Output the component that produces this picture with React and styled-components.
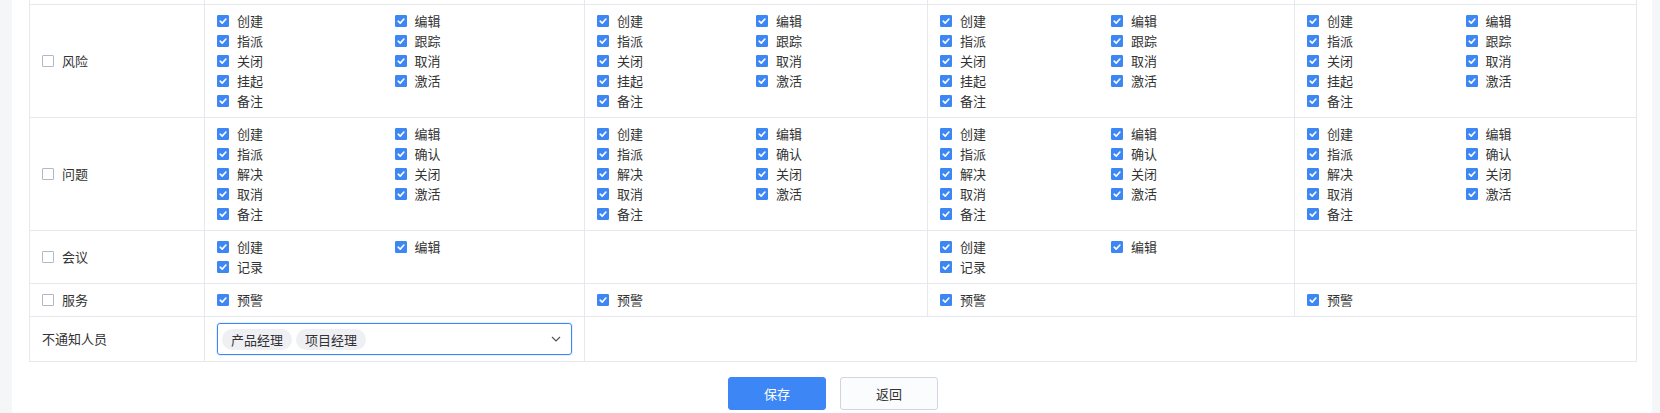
import React from "react";
import styled, { createGlobalStyle } from "styled-components";

const GlobalStyle = createGlobalStyle`
  html, body {
    margin: 0;
    padding: 0;
    background: #f5f6f8;
  }
  body {
    font-family: "Noto Sans CJK SC", "Noto Sans", Roboto, sans-serif;
    font-size: 13px;
    color: #333;
  }
  * { box-sizing: border-box; }
`;

const Page = styled.div`
  padding: 0 8px 0 12px;
  min-height: 100vh;
`;

const Card = styled.div`
  background: #fff;
  min-height: 100vh;
  padding: 0 15px 24px 17px;
`;

const Table = styled.div`
  display: grid;
  grid-template-columns: 175px 380px 343px 367px 342px;
  border-left: 1px solid #e7e8ee;
`;

const Cell = styled.div`
  border-right: 1px solid #e7e8ee;
  border-bottom: 1px solid #e7e8ee;
  padding: 6px 12px;
  grid-column: ${(p) => (p.$span ? `span ${p.$span}` : "auto")};
`;

/* tail of the row scrolled above the view */
const StubCell = styled.div`
  height: 5px;
  border-right: 1px solid #e7e8ee;
  border-bottom: 1px solid #e7e8ee;
`;

const LabelCell = styled(Cell)`
  display: flex;
  align-items: center;
  gap: 8px;
  line-height: 20px;
`;

const ActionGrid = styled.div`
  display: grid;
  grid-template-columns: 1fr 1fr;
`;

const Item = styled.label`
  display: flex;
  align-items: center;
  gap: 8px;
  height: 20px;
  line-height: 20px;
  white-space: nowrap;
`;

const Box = styled.span`
  flex: none;
  width: 12px;
  height: 12px;
  border-radius: 1px;
  display: inline-flex;
  align-items: center;
  justify-content: center;
  background: ${(p) => (p.$checked ? "#3d87f5" : "#fff")};
  border: 1px solid ${(p) => (p.$checked ? "#3d87f5" : "#b3b8c6")};
`;

const Select = styled.div`
  height: 32px;
  border: 1px solid #3d87f5;
  border-radius: 3px;
  box-shadow: 0 0 0 1px rgba(61, 135, 245, 0.12);
  display: flex;
  align-items: center;
  padding: 0 10px 0 4px;
  gap: 4px;
`;

const Tag = styled.span`
  height: 21px;
  line-height: 21px;
  padding: 0 9px;
  border-radius: 11px;
  background: #eff0f3;
  color: #333;
`;

const Chevron = styled.svg`
  margin-left: auto;
  flex: none;
`;

const Footer = styled.div`
  display: flex;
  justify-content: center;
  gap: 14px;
  margin-top: 15px;
`;

const Button = styled.button`
  width: 98px;
  height: 33px;
  border-radius: 3px;
  font-family: inherit;
  font-size: 13px;
  cursor: pointer;
  background: ${(p) => (p.$primary ? "#3c86f6" : "#fbfcfe")};
  color: ${(p) => (p.$primary ? "#fff" : "#333")};
  border: 1px solid ${(p) => (p.$primary ? "#3c86f6" : "#d1d5e0")};
`;

function CheckBox({ checked }) {
  return (
    <Box $checked={checked}>
      {checked && (
        <svg width="10" height="10" viewBox="0 0 10 10">
          <polyline
            points="2.2,5.2 4.2,7.1 7.9,3"
            fill="none"
            stroke="#fff"
            strokeWidth="1.6"
            strokeLinecap="round"
            strokeLinejoin="round"
          />
        </svg>
      )}
    </Box>
  );
}

const riskActions = ["创建", "编辑", "指派", "跟踪", "关闭", "取消", "挂起", "激活", "备注"];
const issueActions = ["创建", "编辑", "指派", "确认", "解决", "关闭", "取消", "激活", "备注"];
const meetingActions = ["创建", "编辑", "记录"];
const serviceActions = ["预警"];

const rows = [
  { name: "风险", cols: [riskActions, riskActions, riskActions, riskActions] },
  { name: "问题", cols: [issueActions, issueActions, issueActions, issueActions] },
  { name: "会议", cols: [meetingActions, [], meetingActions, []] },
  { name: "服务", cols: [serviceActions, serviceActions, serviceActions, serviceActions] },
];

function ActionCell({ actions }) {
  return (
    <Cell>
      <ActionGrid>
        {actions.map((a, i) => (
          <Item key={i}>
            <CheckBox checked />
            {a}
          </Item>
        ))}
      </ActionGrid>
    </Cell>
  );
}

export default function App() {
  return (
    <>
      <GlobalStyle />
      <Page>
        <Card>
          <Table>
            {[0, 1, 2, 3, 4].map((i) => (
              <StubCell key={i} />
            ))}
            {rows.map((row) => (
              <React.Fragment key={row.name}>
                <LabelCell>
                  <CheckBox checked={false} />
                  {row.name}
                </LabelCell>
                {row.cols.map((actions, i) => (
                  <ActionCell key={i} actions={actions} />
                ))}
              </React.Fragment>
            ))}
            <LabelCell>不通知人员</LabelCell>
            <Cell>
              <Select>
                <Tag>产品经理</Tag>
                <Tag>项目经理</Tag>
                <Chevron width="10" height="6" viewBox="0 0 10 6">
                  <polyline
                    points="1,1 5,5 9,1"
                    fill="none"
                    stroke="#555"
                    strokeWidth="1.2"
                  />
                </Chevron>
              </Select>
            </Cell>
            <Cell $span={3} />
          </Table>
          <Footer>
            <Button $primary>保存</Button>
            <Button>返回</Button>
          </Footer>
        </Card>
      </Page>
    </>
  );
}
